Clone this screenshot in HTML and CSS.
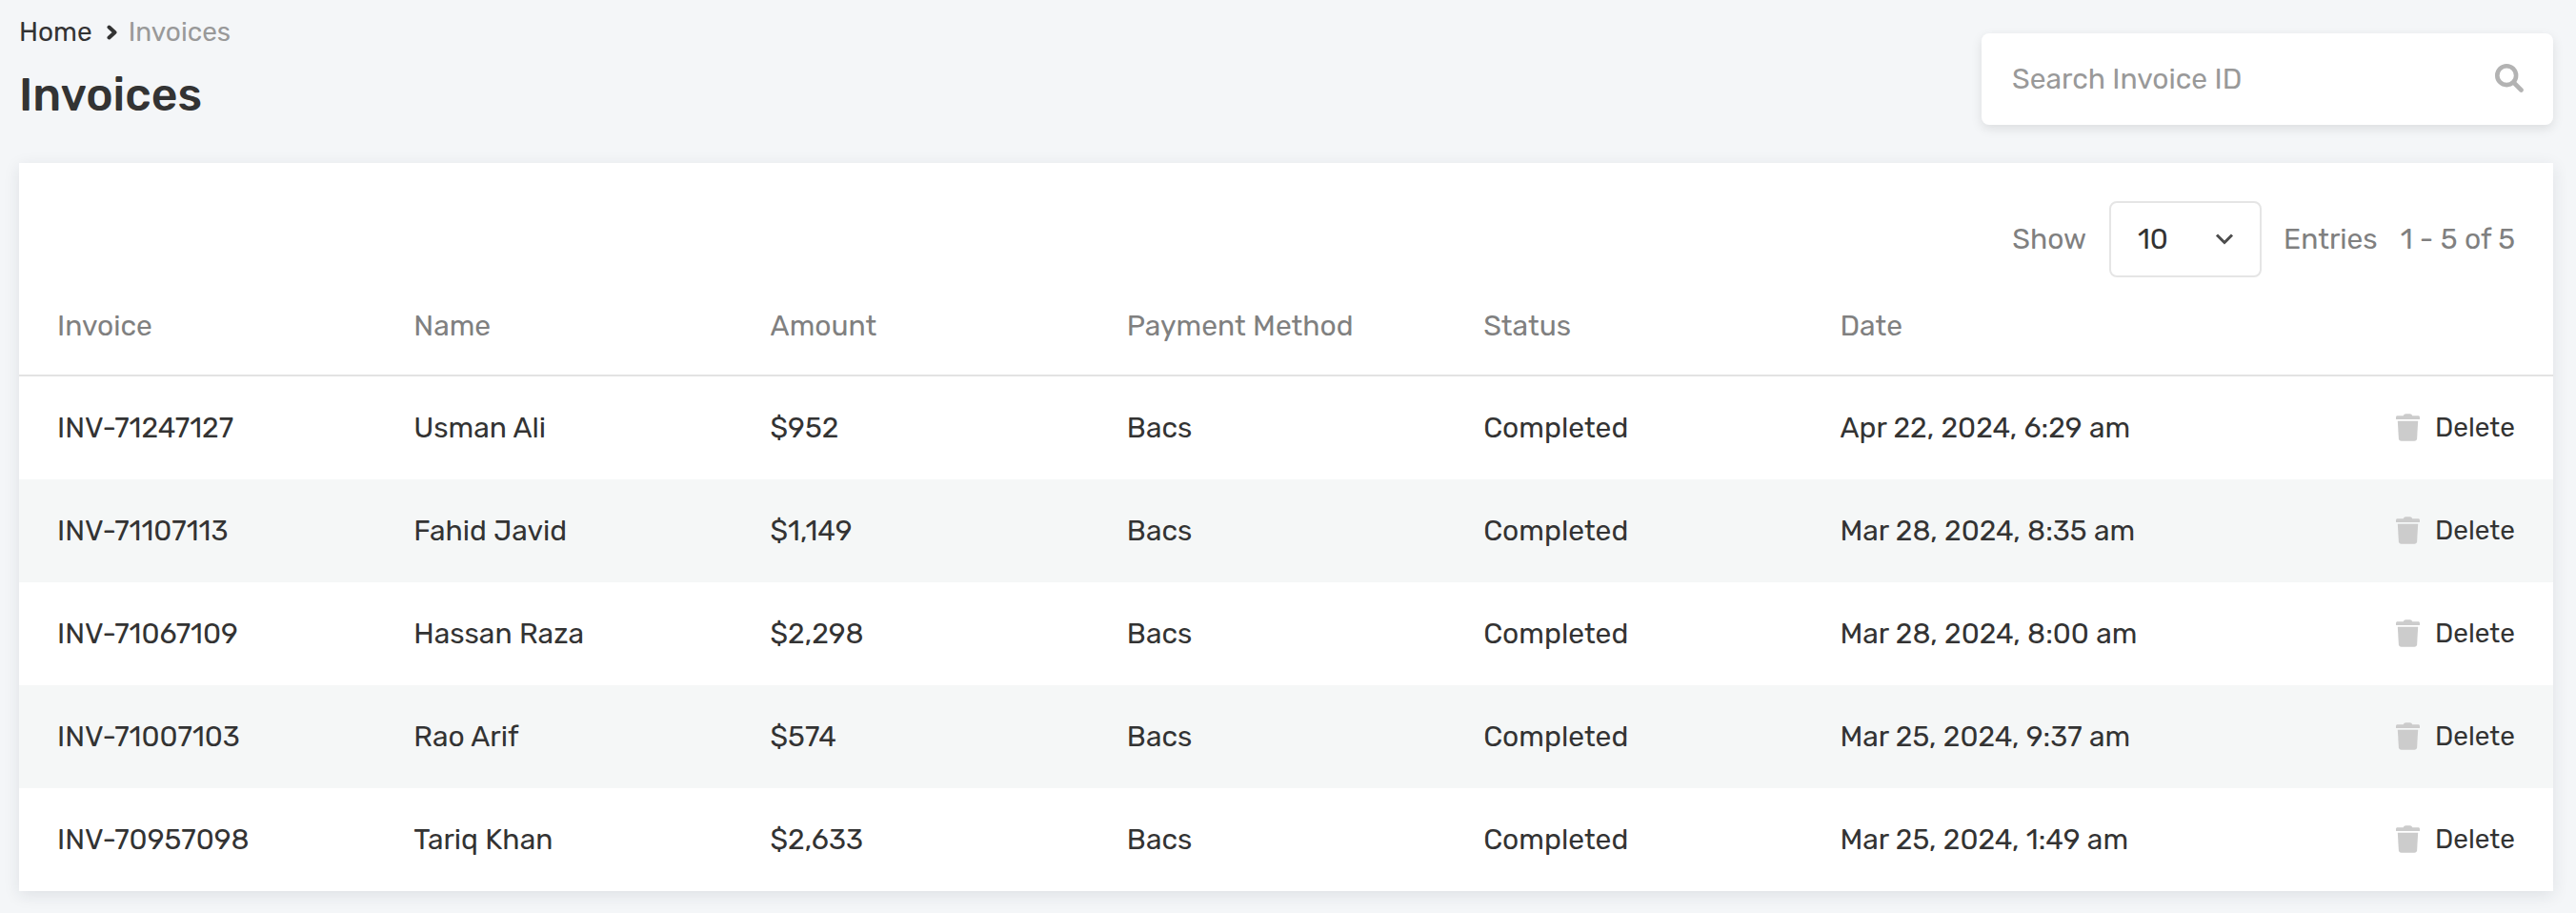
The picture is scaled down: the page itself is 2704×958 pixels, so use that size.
FILE: index.html
```html
<!DOCTYPE html>
<html lang="en">
<head>
<meta charset="utf-8">
<title>Invoices</title>
<link rel="stylesheet" href="styles.css">
</head>
<body>
<svg width="0" height="0" class="sprite" aria-hidden="true">
  <symbol id="trash" viewBox="0 0 25 29">
    <path d="M0 4.100C0 2.900.6 2.300 1.700 2.300H7.700C8.200.9 9 .2 10.400.2H14.600C16 .2 16.800.9 17.300 2.300H23.300C24.400 2.300 25 2.900 25 4.100V5.900H0Z"/>
    <path d="M1.800 7.800H23.200L22.100 26.200C22 27.800 21 28.700 19.500 28.700H5.500C4 28.700 3 27.800 2.900 26.200Z"/>
  </symbol>
</svg>
<header class="header">
  <div>
    <nav class="breadcrumb">
      <a class="home">Home</a>
      <svg class="sep" viewBox="0 0 12 16"><path d="M2.500 2.500L8.500 8L2.500 13.500"/></svg>
      <span class="current">Invoices</span>
    </nav>
    <h1 class="title">Invoices</h1>
  </div>
  <div class="search">
    <span class="placeholder">Search Invoice ID</span>
    <svg class="search-icon" viewBox="0 0 30 30"><circle cx="12.200" cy="12.200" r="9.900"/><path d="M19.500 19.500L27.500 27.500"/></svg>
  </div>
</header>
<main class="card">
  <div class="toolbar">
    <span>Show</span>
    <div class="select"><span>10</span><svg viewBox="0 0 20 14"><path d="M2 2.500L10 10.500L18 2.500"/></svg></div>
    <span>Entries</span>
    <span class="range">1 - 5 of 5</span>
  </div>
  <div class="row head"><span>Invoice</span><span>Name</span><span>Amount</span><span>Payment Method</span><span>Status</span><span>Date</span></div>
  <div class="row"><span>INV-71247127</span><span>Usman Ali</span><span>$952</span><span>Bacs</span><span>Completed</span><span>Apr 22, 2024, 6:29 am</span><a class="delete"><svg><use href="#trash"/></svg>Delete</a></div>
  <div class="row"><span>INV-71107113</span><span>Fahid Javid</span><span>$1,149</span><span>Bacs</span><span>Completed</span><span>Mar 28, 2024, 8:35 am</span><a class="delete"><svg><use href="#trash"/></svg>Delete</a></div>
  <div class="row"><span>INV-71067109</span><span>Hassan Raza</span><span>$2,298</span><span>Bacs</span><span>Completed</span><span>Mar 28, 2024, 8:00 am</span><a class="delete"><svg><use href="#trash"/></svg>Delete</a></div>
  <div class="row"><span>INV-71007103</span><span>Rao Arif</span><span>$574</span><span>Bacs</span><span>Completed</span><span>Mar 25, 2024, 9:37 am</span><a class="delete"><svg><use href="#trash"/></svg>Delete</a></div>
  <div class="row"><span>INV-70957098</span><span>Tariq Khan</span><span>$2,633</span><span>Bacs</span><span>Completed</span><span>Mar 25, 2024, 1:49 am</span><a class="delete"><svg><use href="#trash"/></svg>Delete</a></div>
</main>
</body>
</html>
```
FILE: styles.css
```css
* { box-sizing: border-box; }
body { margin: 0; height: 958px; background: #f4f6f8; color: #333; font: 400 30px/36px Rubik, Roboto, "Noto Sans", sans-serif; overflow: hidden; }
.sprite { position: absolute; }
.header { display: flex; justify-content: space-between; align-items: flex-start; height: 171px; padding: 17px 24px 0 20px; }
.breadcrumb { display: flex; align-items: center; font-size: 28px; line-height: 34px; }
.sep { width: 12px; height: 16px; margin: 0 11px 0 15px; fill: none; stroke: #333; stroke-width: 4; stroke-linecap: round; stroke-linejoin: round; }
.current { color: #999; }
.title { margin: 20px 0 0; font-size: 48px; line-height: 58px; font-weight: 500; }
.search { display: flex; align-items: center; justify-content: space-between; width: 600px; height: 96px; margin-top: 18px; padding: 0 31px 0 32px; border-radius: 8px; background: #fff; box-shadow: 0 4px 12px rgba(0,0,0,.1); }
.placeholder { color: #999; }
.search-icon { width: 30px; height: 30px; margin-bottom: 2px; fill: none; stroke: #b3b3b3; stroke-width: 4.6; stroke-linecap: round; }
.card { width: 2660px; height: 764px; margin-left: 20px; padding-top: 40px; background: #fff; box-shadow: 0 4px 16px rgba(25,35,55,.1); }
.toolbar { display: flex; align-items: center; justify-content: flex-end; height: 80px; padding: 0 40px; color: #808080; }
.select { display: flex; align-items: center; justify-content: space-between; width: 160px; height: 80px; margin: 0 23px 0 24px; padding: 0 27px 0 28px; border: 2px solid #e5e5e5; border-radius: 8px; color: #333; }
.select svg { width: 20px; height: 14px; fill: none; stroke: #4d4d4d; stroke-width: 3; }
.range { margin-left: 24px; }
.row { display: grid; grid-template-columns: repeat(7, 1fr); align-items: center; height: 108px; padding-left: 40px; white-space: nowrap; }
.row:nth-child(2n+4) { background: #f5f7f7; }
.row.head { height: 104px; border-bottom: 2px solid #e3e3e3; color: #808080; }
.delete { display: flex; align-items: center; justify-content: flex-end; padding-right: 40px; font-size: 28px; }
.delete svg { width: 25px; height: 29px; margin: 0 16px 1px 0; fill: #ccc; }
```
